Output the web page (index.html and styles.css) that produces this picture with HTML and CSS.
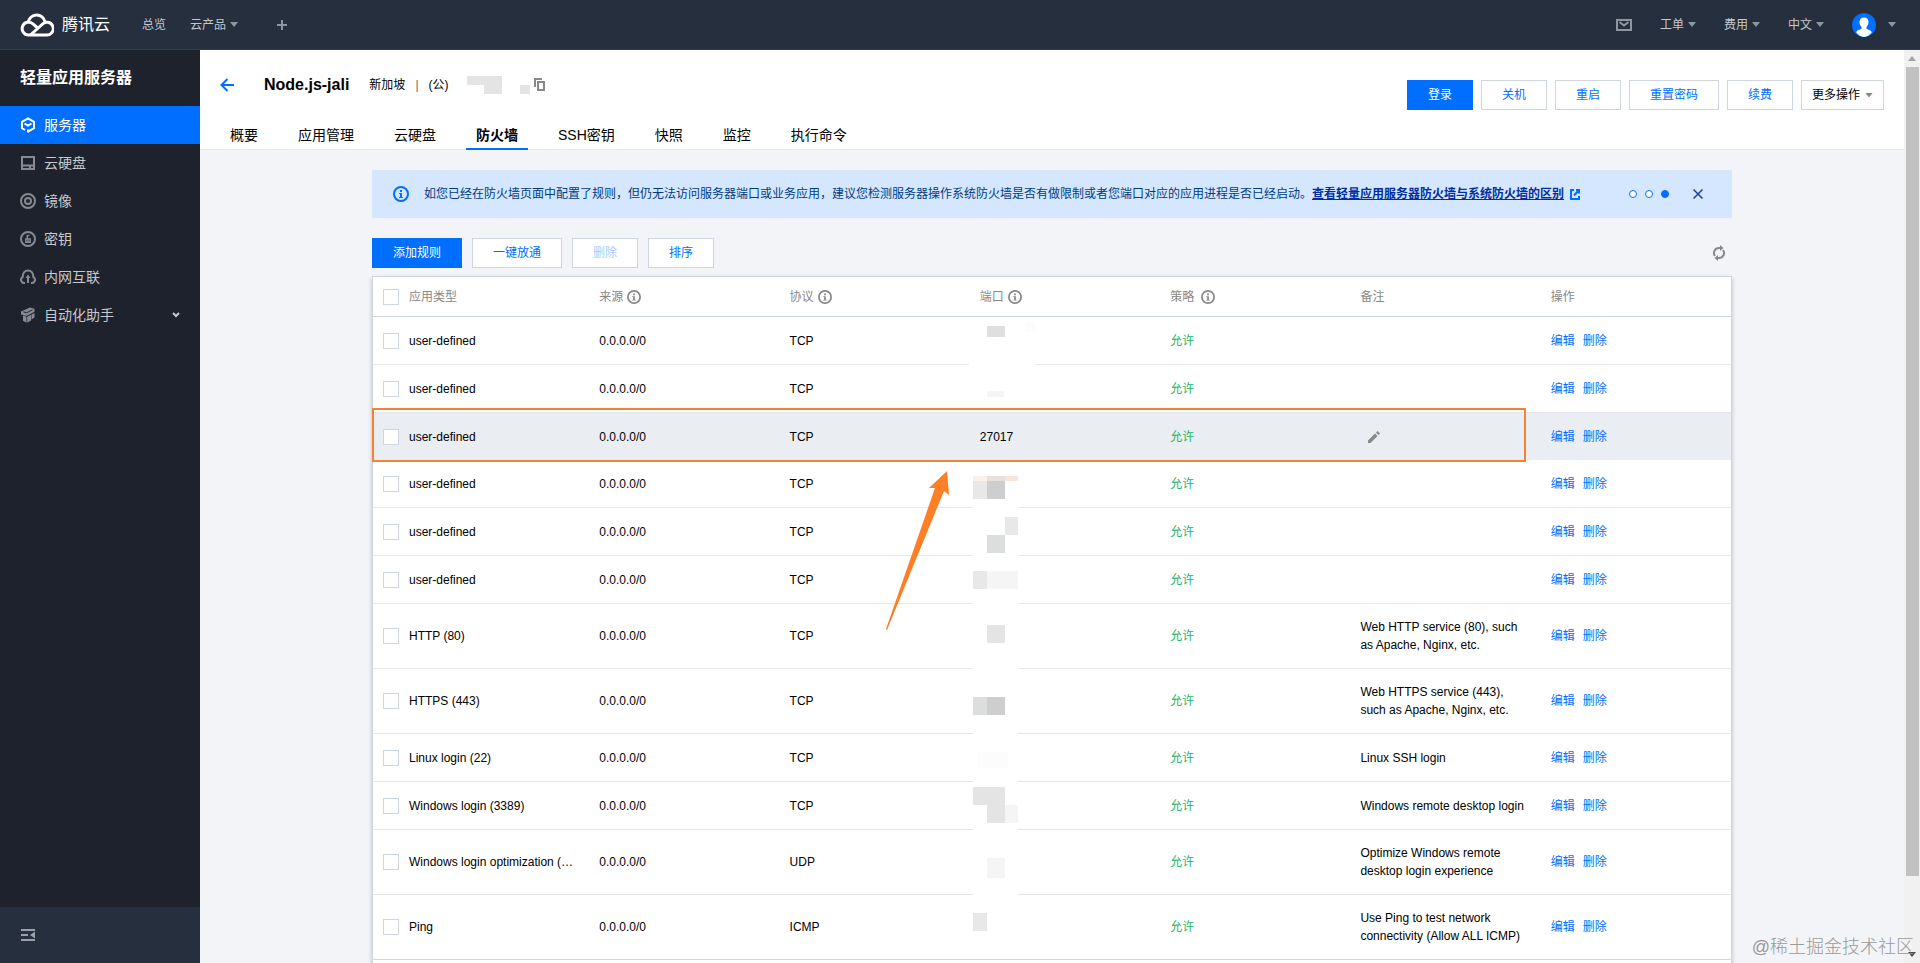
FILE: index.html
```html
<!DOCTYPE html>
<html lang="zh-CN">
<head>
    <meta charset="UTF-8">
    <meta name="viewport" content="width=device-width, initial-scale=1.0">
    <title>轻量应用服务器 - 防火墙</title>
    <link rel="stylesheet" href="styles.css">
</head>
<body>
    <svg class="sprite">
        <symbol id="info" viewBox="0 0 16 16">
            <circle cx="8" cy="8" r="7" fill="none" stroke="currentColor" stroke-width="2"/>
            <path fill="currentColor" d="M7 4h2v2H7zM6 7h3v4h1v1H6v-1h1V8H6z"/>
        </symbol>
    </svg>

    <header class="topbar">
        <a class="logo" href="#">
            <svg width="34" height="25" viewBox="0 0 34 25" fill="none" stroke="#fff" stroke-width="3">
                <path d="M11 22.500 22 12.500A6.400 6.400 0 1 1 26 23H8.500A6.400 6.400 0 1 1 13 12L17 15.500"/>
                <path d="M8.200 10.500A8.500 8.500 0 0 1 25 10"/>
            </svg>
            <span>腾讯云</span>
        </a>
        <nav class="topbar-nav">
            <a href="#">总览</a>
            <a href="#">云产品<i class="caret"></i></a>
            <a class="plus" href="#" aria-label="添加">
                <svg width="10" height="10" viewBox="0 0 10 10"><path d="M5 0v10M0 5h10" stroke="#8e96a0" stroke-width="2"/></svg>
            </a>
        </nav>
        <nav class="topbar-right">
            <a href="#" aria-label="消息">
                <svg width="16" height="12" viewBox="0 0 16 12" fill="none" stroke="#8e96a0" stroke-width="2"><path d="M1 1h14v10H1zM3.500 3 8 6.500 12.500 3"/></svg>
            </a>
            <a href="#">工单<i class="caret"></i></a>
            <a href="#">费用<i class="caret"></i></a>
            <a href="#">中文<i class="caret"></i></a>
            <a class="user" href="#" aria-label="账号">
                <svg width="24" height="24" viewBox="0 0 24 24">
                    <circle cx="12" cy="12" r="12" fill="#006eff"/>
                    <path fill="#fff" d="M12 4.500c3 0 4.500 2 4.500 4.800 0 2.200-.9 3.700-2 4.700v1.800c2.500.8 4.400 1.700 5.400 3.500A11.500 11.500 0 0 1 12 24a11.500 11.500 0 0 1-7.900-4.700c1-1.800 2.900-2.700 5.400-3.500V14c-1.100-1-2-2.500-2-4.700 0-2.800 1.500-4.800 4.500-4.800z"/>
                </svg>
                <i class="caret"></i>
            </a>
        </nav>
    </header>

    <div class="layout">
        <aside class="sidebar">
            <h2>轻量应用服务器</h2>
            <nav class="menu">
                <a class="active" href="#">
                    <svg width="16" height="16" viewBox="0 0 16 16" fill="none" stroke="currentColor" stroke-width="2"><path d="M5 13 2 11.200V4.800L8 1.300l6 3.500v6.400L8 14.700M4.500 6.500 8 8.500l3.500-2"/><path d="M8 12.500v3"/></svg>
                    服务器
                </a>
                <a href="#">
                    <svg width="16" height="16" viewBox="0 0 16 16" fill="none" stroke="currentColor" stroke-width="2"><path d="M2 2h12v12H2zM2 10.500h12"/><path d="M9 12h2"/></svg>
                    云硬盘
                </a>
                <a href="#">
                    <svg width="16" height="16" viewBox="0 0 16 16" fill="none" stroke="currentColor" stroke-width="2"><circle cx="8" cy="8" r="7"/><circle cx="8" cy="8" r="3"/></svg>
                    镜像
                </a>
                <a href="#">
                    <svg width="16" height="16" viewBox="0 0 16 16" fill="none" stroke="currentColor" stroke-width="2"><circle cx="8" cy="8" r="7"/><path stroke-width="1.500" d="M9.500 4.500H7.300V8M5.800 8h4.400v3.300H5.800zM8 9v1.500"/></svg>
                    密钥
                </a>
                <a href="#">
                    <svg width="16" height="16" viewBox="0 0 16 16" fill="none" stroke="currentColor" stroke-width="2"><path d="M5 14H4a3.200 3.200 0 0 1-1.300-6C2.700 4 5 1.500 8 1.500S13.300 4 13.300 8A3.200 3.200 0 0 1 12 14h-1M8 14V8"/><path fill="currentColor" stroke="none" d="m8 5.500 2.500 3.500h-5z"/></svg>
                    内网互联
                </a>
                <a href="#">
                    <svg width="16" height="16" viewBox="0 0 16 16" fill="currentColor"><path d="m1 4.500 9-4 4.500 1.300v3L6.500 9 1 7.500z"/><path d="m3 8.500 3.500 1.200v6L3 13.700zM7.200 9.700 11 7.800v5.700l-3.800 2.200zM11.500 7.500 14.500 6v4.500l-3 2z"/><path fill="none" stroke="#1e222d" d="m3.500 4.800 3 1 6-3"/></svg>
                    自动化助手
                    <svg class="chevron" width="8" height="6" viewBox="0 0 8 6" fill="none" stroke="currentColor" stroke-width="2"><path d="m1 1 3 3 3-3"/></svg>
                </a>
            </nav>
            <div class="sidebar-footer">
                <button type="button" aria-label="收起菜单">
                    <svg width="14" height="12" viewBox="0 0 14 12" fill="#9aa0a9"><path d="M0 0h14v2H0zM0 5h7v2H0zM0 10h14v2H0zM14 2.500v7L9 6z"/></svg>
                </button>
            </div>
        </aside>

        <main class="main">
            <div class="page-header">
                <div class="title-row">
                    <a class="back" href="#" aria-label="返回">
                        <svg width="14" height="14" viewBox="0 0 14 14" fill="none" stroke="#006eff" stroke-width="2"><path d="M14 7H2M7.500 1 1.500 7l6 6"/></svg>
                    </a>
                    <h1>Node.js-jali</h1>
                    <div class="server-info">
                        <span>新加坡</span><span class="sep">|</span><span>(公)</span>
                    </div>
                    <!-- IP 已打码 -->
                    <svg class="ip-mask" width="64" height="18" viewBox="0 0 64 18">
                        <path fill="#e4e4e4" d="M0 0h35v18H17V9H0zM53 9h10v9H53z"/>
                    </svg>
                    <button class="copy" type="button" aria-label="复制">
                        <svg width="11" height="13" viewBox="0 0 11 13" fill="none" stroke="#888" stroke-width="2"><path d="M1 9V1h7M4 4h6v8H4z"/></svg>
                    </button>
                </div>
                <div class="header-actions">
                    <button class="btn btn-primary" type="button">登录</button>
                    <button class="btn" type="button">关机</button>
                    <button class="btn" type="button">重启</button>
                    <button class="btn" type="button">重置密码</button>
                    <button class="btn" type="button">续费</button>
                    <button class="btn btn-more" type="button">更多操作<i class="caret"></i></button>
                </div>
                <nav class="tabs">
                    <a href="#">概要</a>
                    <a href="#">应用管理</a>
                    <a href="#">云硬盘</a>
                    <a class="active" href="#">防火墙</a>
                    <a href="#">SSH密钥</a>
                    <a href="#">快照</a>
                    <a href="#">监控</a>
                    <a href="#">执行命令</a>
                </nav>
            </div>

            <div class="content">
                <div class="alert">
                    <svg class="alert-icon" width="16" height="16"><use href="#info"/></svg>
                    <p>如您已经在防火墙页面中配置了规则，但仍无法访问服务器端口或业务应用，建议您检测服务器操作系统防火墙是否有做限制或者您端口对应的应用进程是否已经启动。<a href="#">查看轻量应用服务器防火墙与系统防火墙的区别</a></p>
                    <svg class="external" width="10" height="11" viewBox="0 0 10 11" fill="none" stroke="#006eff" stroke-width="2"><path d="M4 1H1v9h8V7M6 1h3v3.500M9 1 4 6.500"/></svg>
                    <div class="dots"><i></i><i></i><i class="on"></i></div>
                    <button class="close" type="button" aria-label="关闭">
                        <svg width="10" height="10" viewBox="0 0 10 10" stroke="#1d3f9e" stroke-width="1.500"><path d="m.5.5 9 9M9.500.5l-9 9"/></svg>
                    </button>
                </div>

                <div class="toolbar">
                    <button class="btn btn-primary" type="button">添加规则</button>
                    <button class="btn" type="button">一键放通</button>
                    <button class="btn" type="button" disabled>删除</button>
                    <button class="btn" type="button">排序</button>
                    <button class="refresh" type="button" aria-label="刷新">
                        <svg width="14" height="16" viewBox="0 0 14 16" fill="none" stroke="#888" stroke-width="2"><path d="M9 3H7a5 5 0 0 0-4 8M5 13h2a5 5 0 0 0 4-8"/><path fill="#888" stroke="none" d="M8 0v6l3.500-3zM6 10v6l-3.500-3z"/></svg>
                    </button>
                </div>

                <div class="table-wrap">
                    <table class="rules">
                        <colgroup>
                            <col class="col-check"><col><col><col><col><col><col><col>
                        </colgroup>
                        <thead>
                            <tr>
                                <th class="check"><input type="checkbox" id="all"></th>
                                <th><label for="all">应用类型</label></th>
                                <th>来源<svg class="tip"><use href="#info"/></svg></th>
                                <th>协议<svg class="tip"><use href="#info"/></svg></th>
                                <th class="port">端口<svg class="tip"><use href="#info"/></svg>
                                    <!-- 端口打码 -->
                                    <svg class="mosaic" width="68" height="620" viewBox="0 0 68 620">
                                        <path fill="#fff" d="M0 1h66v94H0zM4 148h45v470H4z"/>
                                        <path fill="#dfdfdf" d="M18 9h18v11H18z"/>
                                        <path fill="#fcfcfc" d="M56 6h10v9H56zM8 435h31v16H8z"/>
                                        <path fill="#f5f5f5" d="M18 74h17v6H18zM18 254h31v18H18zM36 488h13v18H36zM18 541h18v20H18z"/>
                                        <path fill="#fdf0ea" d="M4 159h14v5H4z"/>
                                        <path fill="#f9e4de" d="M36 159h13v5H36z"/>
                                        <path fill="#e5e1de" d="M18 159h18v5H18z"/>
                                        <path fill="#cecece" d="M18 164h18v18H18zM18 380h18v18H18z"/>
                                        <path fill="#e8e8e8" d="M4 164h14v18H4zM36 200h13v18H36zM4 254h14v18H4zM4 596h14v18H4z"/>
                                        <path fill="#dcdddd" d="M18 218h18v18H18zM4 380h14v18H4z"/>
                                        <path fill="#e4e4e4" d="M18 308h18v18H18zM4 470h32v18H4zM18 488h18v18H18z"/>
                                    </svg>
                                    <svg class="arrow" width="63" height="159" viewBox="0 0 63 159"><path fill="#ff7f27" d="M61 0 63 24 58 20 1 159 0 158 49 17 43 17z"/></svg>
                                </th>
                                <th>策略 <svg class="tip"><use href="#info"/></svg></th>
                                <th>备注</th>
                                <th>操作</th>
                            </tr>
                        </thead>
                        <tbody>
                            <tr>
                                <td class="check"><input type="checkbox" id="r1"></td>
                                <td><label for="r1">user-defined</label></td>
                                <td>0.0.0.0/0</td>
                                <td>TCP</td>
                                <td></td>
                                <td class="allow">允许</td>
                                <td></td>
                                <td class="ops"><a href="#">编辑</a><a href="#">删除</a></td>
                            </tr>
                            <tr>
                                <td class="check"><input type="checkbox" id="r2"></td>
                                <td><label for="r2">user-defined</label></td>
                                <td>0.0.0.0/0</td>
                                <td>TCP</td>
                                <td></td>
                                <td class="allow">允许</td>
                                <td></td>
                                <td class="ops"><a href="#">编辑</a><a href="#">删除</a></td>
                            </tr>
                            <tr class="hover">
                                <td class="check"><input type="checkbox" id="r3"></td>
                                <td><label for="r3">user-defined</label></td>
                                <td>0.0.0.0/0</td>
                                <td>TCP</td>
                                <td>27017</td>
                                <td class="allow">允许</td>
                                <td>
                                    <button class="edit" type="button" aria-label="编辑备注">
                                        <svg width="12" height="12" viewBox="0 0 12 12" fill="#888"><path d="M0 12V9.500L7 2.500 9.500 5l-7 7zM8 1.500 9.500 0 12 2.500 10.500 4z"/></svg>
                                    </button>
                                </td>
                                <td class="ops"><a href="#">编辑</a><a href="#">删除</a></td>
                            </tr>
                            <tr>
                                <td class="check"><input type="checkbox" id="r4"></td>
                                <td><label for="r4">user-defined</label></td>
                                <td>0.0.0.0/0</td>
                                <td>TCP</td>
                                <td></td>
                                <td class="allow">允许</td>
                                <td></td>
                                <td class="ops"><a href="#">编辑</a><a href="#">删除</a></td>
                            </tr>
                            <tr>
                                <td class="check"><input type="checkbox" id="r5"></td>
                                <td><label for="r5">user-defined</label></td>
                                <td>0.0.0.0/0</td>
                                <td>TCP</td>
                                <td></td>
                                <td class="allow">允许</td>
                                <td></td>
                                <td class="ops"><a href="#">编辑</a><a href="#">删除</a></td>
                            </tr>
                            <tr>
                                <td class="check"><input type="checkbox" id="r6"></td>
                                <td><label for="r6">user-defined</label></td>
                                <td>0.0.0.0/0</td>
                                <td>TCP</td>
                                <td></td>
                                <td class="allow">允许</td>
                                <td></td>
                                <td class="ops"><a href="#">编辑</a><a href="#">删除</a></td>
                            </tr>
                            <tr>
                                <td class="check"><input type="checkbox" id="r7"></td>
                                <td><label for="r7">HTTP (80)</label></td>
                                <td>0.0.0.0/0</td>
                                <td>TCP</td>
                                <td></td>
                                <td class="allow">允许</td>
                                <td>Web HTTP service (80), such as Apache, Nginx, etc.</td>
                                <td class="ops"><a href="#">编辑</a><a href="#">删除</a></td>
                            </tr>
                            <tr>
                                <td class="check"><input type="checkbox" id="r8"></td>
                                <td><label for="r8">HTTPS (443)</label></td>
                                <td>0.0.0.0/0</td>
                                <td>TCP</td>
                                <td></td>
                                <td class="allow">允许</td>
                                <td>Web HTTPS service (443), such as Apache, Nginx, etc.</td>
                                <td class="ops"><a href="#">编辑</a><a href="#">删除</a></td>
                            </tr>
                            <tr>
                                <td class="check"><input type="checkbox" id="r9"></td>
                                <td><label for="r9">Linux login (22)</label></td>
                                <td>0.0.0.0/0</td>
                                <td>TCP</td>
                                <td></td>
                                <td class="allow">允许</td>
                                <td>Linux SSH login</td>
                                <td class="ops"><a href="#">编辑</a><a href="#">删除</a></td>
                            </tr>
                            <tr>
                                <td class="check"><input type="checkbox" id="r10"></td>
                                <td><label for="r10">Windows login (3389)</label></td>
                                <td>0.0.0.0/0</td>
                                <td>TCP</td>
                                <td></td>
                                <td class="allow">允许</td>
                                <td>Windows remote desktop login</td>
                                <td class="ops"><a href="#">编辑</a><a href="#">删除</a></td>
                            </tr>
                            <tr>
                                <td class="check"><input type="checkbox" id="r11"></td>
                                <td><label for="r11">Windows login optimization (…</label></td>
                                <td>0.0.0.0/0</td>
                                <td>UDP</td>
                                <td></td>
                                <td class="allow">允许</td>
                                <td>Optimize Windows remote desktop login experience</td>
                                <td class="ops"><a href="#">编辑</a><a href="#">删除</a></td>
                            </tr>
                            <tr>
                                <td class="check"><input type="checkbox" id="r12"></td>
                                <td><label for="r12">Ping</label></td>
                                <td>0.0.0.0/0</td>
                                <td>ICMP</td>
                                <td></td>
                                <td class="allow">允许</td>
                                <td>Use Ping to test network connectivity (Allow ALL ICMP)</td>
                                <td class="ops"><a href="#">编辑</a><a href="#">删除</a></td>
                            </tr>
                        </tbody>
                    </table>
                    <div class="pagination"></div>
                    <div class="mark"></div>
                </div>
            </div>
        </main>

        <div class="scrollbar">
            <i class="up"></i>
            <div class="track"><div class="thumb"></div></div>
            <i class="down"></i>
        </div>
    </div>

    <div class="watermark">@稀土掘金技术社区</div>
</body>
</html>
```

FILE: styles.css
```css
* {
    box-sizing: border-box;
}
body {
    display: flex;
    flex-direction: column;
    height: 100vh;
    margin: 0;
    overflow: hidden;
    font: 12px/18px "Liberation Sans", "Noto Sans CJK SC", sans-serif;
    color: #000;
    background-color: #f3f4f8;
}
a {
    color: #006eff;
    text-decoration: none;
}
h1, h2, p {
    margin: 0;
}
svg {
    display: block;
    flex: none;
}
button {
    padding: 0;
    border: 0;
    background: none;
    font: inherit;
    cursor: pointer;
}
.sprite {
    position: absolute;
    width: 0;
    height: 0;
}
.caret {
    width: 8px;
    height: 5px;
    margin-left: 4px;
    background-color: #8e96a0;
    clip-path: polygon(0 0, 100% 0, 50% 100%);
}

/* 顶部导航 */
.topbar {
    display: flex;
    flex: none;
    align-items: center;
    height: 50px;
    padding: 0 24px 0 20px;
    background-color: #262f3e;
    border-bottom: 1px solid #343c4a;
}
.topbar a {
    display: flex;
    align-items: center;
    color: #c3c8cf;
}
.topbar .logo {
    gap: 8px;
    margin-right: 32px;
    color: #fff;
    font-size: 16px;
}
.topbar-nav {
    display: flex;
    gap: 24px;
}
.topbar-nav .plus {
    margin-left: 15px;
}
.topbar-right {
    display: flex;
    gap: 28px;
    margin-left: auto;
}
.topbar-right .user .caret {
    margin-left: 12px;
}

.layout {
    display: flex;
    flex: 1;
    min-height: 0;
}

/* 左侧菜单 */
.sidebar {
    display: flex;
    flex: none;
    flex-direction: column;
    width: 200px;
    background-color: #1e222d;
}
.sidebar h2 {
    padding: 0 20px;
    color: #fff;
    font-size: 16px;
    line-height: 56px;
}
.menu {
    flex: 1;
}
.menu a {
    display: flex;
    align-items: center;
    gap: 8px;
    height: 38px;
    padding: 0 20px;
    color: #c7c9cc;
    font-size: 14px;
}
.menu svg {
    color: #868a92;
}
.menu .active, .menu .active svg {
    color: #fff;
    background-color: #006eff;
}
.menu .chevron {
    margin-left: auto;
    color: #c7c9cc;
}
.sidebar-footer {
    display: flex;
    align-items: center;
    height: 56px;
    padding: 0 21px;
    background-color: #262f3e;
}

/* 实例标题 */
.main {
    flex: 1;
    min-width: 0;
    overflow: hidden;
}
.page-header {
    display: grid;
    grid-template-columns: 1fr auto;
    height: 100px;
    padding: 0 20px;
    background-color: #fff;
    border-bottom: 1px solid #e5e7ea;
}
.title-row {
    display: flex;
    align-items: center;
    height: 69px;
}
h1 {
    margin: 0 20px 0 30px;
    font-size: 16px;
}
.server-info {
    display: flex;
    gap: 10px;
}
.sep {
    color: #666;
}
.ip-mask {
    margin: 0 3px 0 18px;
}
.header-actions {
    display: flex;
    gap: 8px;
    padding-top: 30px;
}
.btn {
    height: 30px;
    padding: 0 20px;
    border: 1px solid #cfd5de;
    background-color: #fff;
    color: #006eff;
}
.btn-primary {
    border-color: #006eff;
    background-color: #006eff;
    color: #fff;
}
.btn:disabled {
    color: #a6cdff;
}
.btn-more {
    display: flex;
    align-items: center;
    padding: 0 10px;
    color: #000;
}
.btn-more .caret {
    margin-left: 5px;
    background-color: #888;
}
.tabs {
    display: flex;
    grid-column: 1 / -1;
    gap: 20px;
    height: 31px;
}
.tabs a {
    padding: 0 10px;
    border-bottom: 2px solid transparent;
    color: #000;
    font-size: 14px;
    line-height: 32px;
}
.tabs .active {
    border-color: #006eff;
    font-weight: bold;
}

/* 提示 */
.content {
    max-width: 1360px;
    margin: 20px auto 0;
}
.alert {
    display: flex;
    align-items: center;
    height: 48px;
    padding: 0 29px 0 21px;
    background-color: #d5e7ff;
    color: #003b80;
}
.alert-icon {
    color: #006eff;
}
.alert p {
    margin: 0 6px 0 15px;
    white-space: nowrap;
}
.alert a {
    color: #002da0;
    font-weight: bold;
    text-decoration: underline;
}
.dots {
    display: flex;
    gap: 8px;
    margin-left: auto;
}
.dots i {
    width: 8px;
    height: 8px;
    border: 1px solid #006eff;
    border-radius: 50%;
    background-color: #fff;
}
.dots .on {
    background-color: #006eff;
}
.close {
    margin-left: 24px;
}

.toolbar {
    display: flex;
    gap: 10px;
    margin: 20px 0 8px;
}
.refresh {
    margin: 0 6px 0 auto;
}

/* 规则表格 */
.table-wrap {
    position: relative;
    border: 1px solid #cfd5de;
    background-color: #fff;
    box-shadow: 0 2px 4px rgba(54, 58, 80, 0.3);
}
.rules {
    width: 100%;
    border-spacing: 0;
    table-layout: fixed;
}
.col-check {
    width: 26px;
}
.rules th, .rules td {
    padding: 0 10px;
    border-bottom: 1px solid #e5e7ea;
    text-align: left;
}
.rules th {
    height: 40px;
    border-color: #cfd5de;
    color: #888;
    font-weight: normal;
}
.rules td {
    height: 48px;
    padding: 14px 10px;
}
.rules .check {
    padding: 0 0 0 10px;
}
.rules tr.hover td {
    height: 47px;
    padding: 0 10px;
    border: 0;
    background-color: #eaedf1;
}
.rules tbody tr:last-child td {
    border-color: #cfd5de;
}
.rules input {
    display: block;
    width: 16px;
    height: 16px;
    margin: 0;
    appearance: none;
    border: 1px solid #cfd5de;
    background-color: #fff;
}
.rules label {
    display: block;
    white-space: nowrap;
}
.tip {
    display: inline-block;
    width: 14px;
    height: 14px;
    margin-left: 4px;
    vertical-align: -3px;
}
.allow {
    color: #1db567;
}
.ops a {
    margin-right: 8px;
}
.edit {
    display: block;
    margin-left: 8px;
}
.port {
    position: relative;
}
.mosaic {
    position: absolute;
    top: 40px;
    left: -1px;
}
.arrow {
    position: absolute;
    top: 194px;
    left: -84px;
}
.pagination {
    height: 50px;
}
.mark {
    position: absolute;
    top: 131px;
    left: -1px;
    width: 85%;
    height: 54px;
    border: 2px solid #f58233;
}

/* 滚动条 */
.scrollbar {
    display: flex;
    flex: none;
    flex-direction: column;
    align-items: center;
    justify-content: space-between;
    width: 16px;
    padding: 6px 0;
    background-color: #f1f1f1;
}
.track {
    flex: 1;
    width: 13px;
    margin: 6px 0;
}
.thumb {
    height: 92%;
    background-color: #c1c1c1;
}
.up, .down {
    width: 8px;
    height: 5px;
    background-color: #a3a3a3;
    clip-path: polygon(50% 0, 100% 100%, 0 100%);
}
.down {
    background-color: #505050;
    clip-path: polygon(0 0, 100% 0, 50% 100%);
}

.watermark {
    position: absolute;
    right: 6px;
    bottom: 4px;
    color: #999;
    font-size: 18px;
    font-weight: 300;
    line-height: 24px;
}
```
